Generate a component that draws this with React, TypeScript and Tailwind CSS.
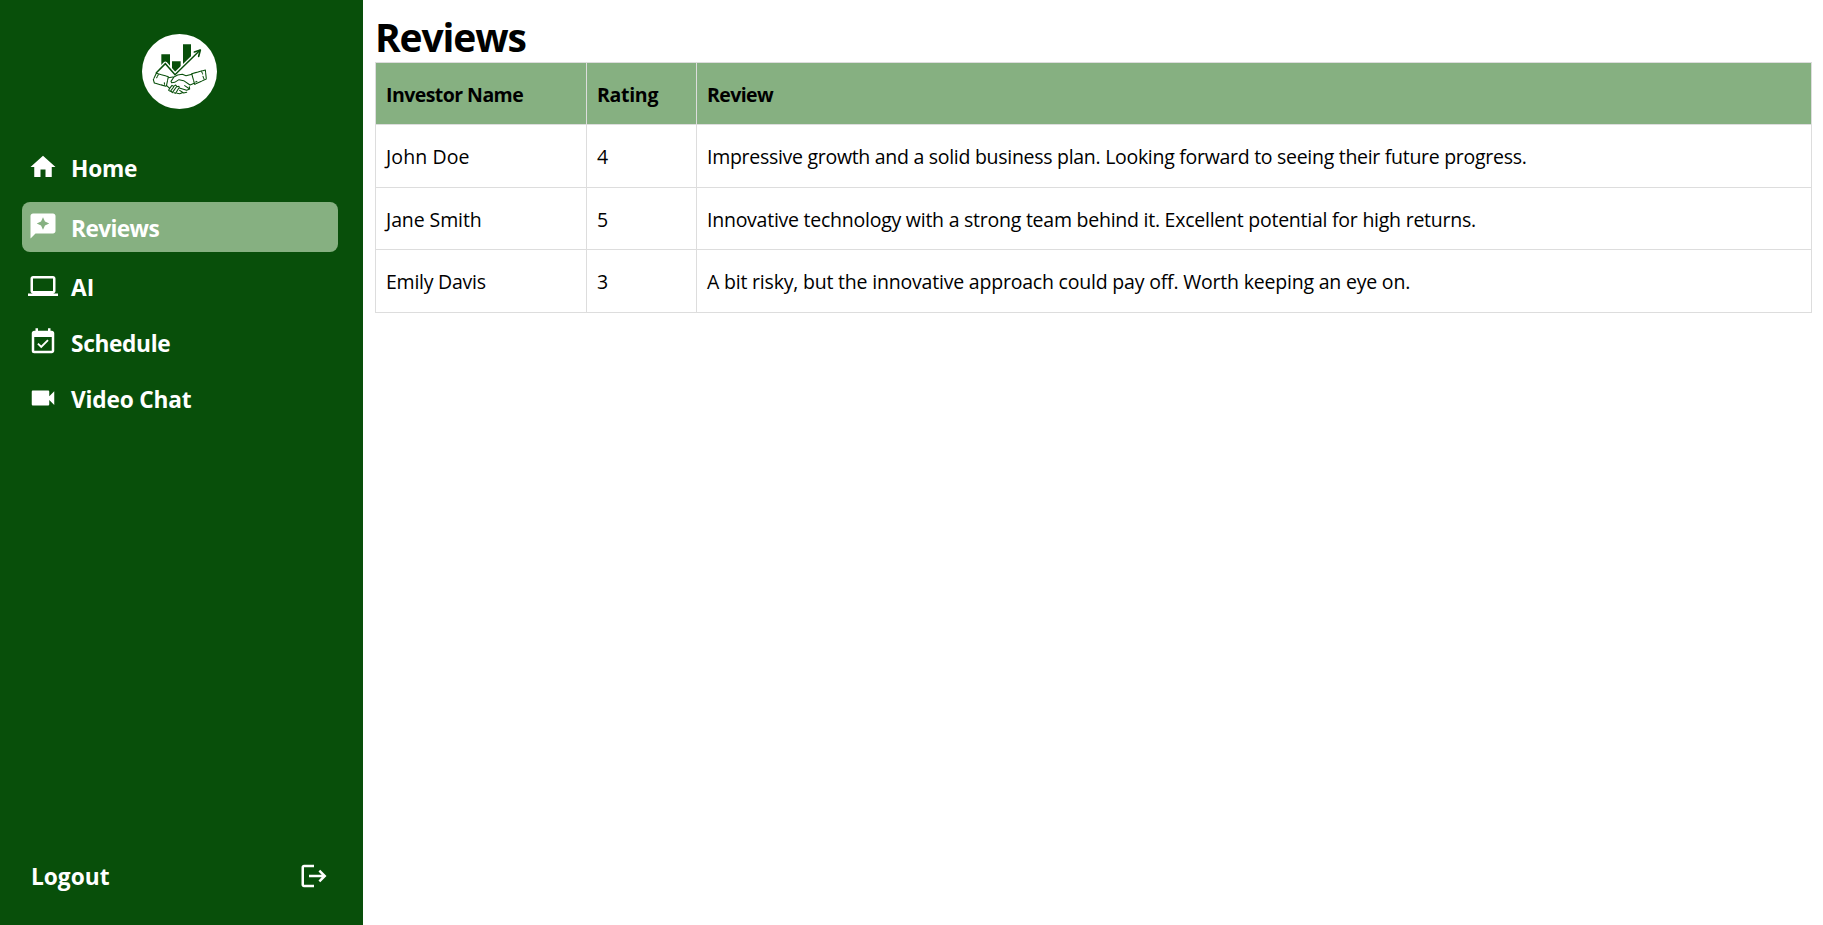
import React from "react";
import { MdComputer, MdEventAvailable, MdHome, MdLogout, MdReviews, MdVideocam } from "react-icons/md";

function Logo() {
  return (
    <svg className="block size-[75px]" viewBox="21 18 225 225" fill="none" stroke="#084f0a" strokeLinejoin="round" strokeLinecap="round">
      <circle cx="133.5" cy="130.5" r="112.5" fill="#fff" stroke="none" />
      <g fill="#084f0a" stroke="none">
        <path d="M79 79h26v38l-14-13-12 13z" />
        <path d="M111 100h26v22l-17 16-9-9z" />
        <path d="M144 49h24v42l-24 23z" />
      </g>
      <path d="M66 132l25-26 29 33 74-72" stroke="#fff" strokeWidth="11" />
      <path d="M64 134l27-27 29 33 75-73" strokeWidth="4.5" strokeLinejoin="miter" />
      <path d="M178 72l18-6-5 19" strokeWidth="5" />
      <g strokeWidth="3.2">
        <path d="M64 136l-9 19 3 10 36 10 6-29z" strokeDasharray="15 2.5" />
        <path d="M70 140l-5 9M88 164l1 8" strokeDasharray="4 3" />
        <path d="M170 137l41-11 3 27-35 16z" strokeDasharray="15 2.5" />
        <path d="M200 131l3 7M204 145l3 8M182 162l6-3" strokeDasharray="4 3" />
        <path d="M100 149l18-3 10-5 14-2 11 4 18-4M117 147l-9 13 2 4 9-1 13-8 14 3 19 13 13-5" />
        <path d="M95 173l9 8 7-9 5 3 6-4 4 5 6-1 1 5 22 7 9-4-1-7M104 181l-3 6 5 3 10-13M109 190l3 4 12-17M117 194l5 2 9-15M126 196l8 1 8-3M134 187l12 8 9-2M149 173l15 10" />
      </g>
    </svg>
  );
}

const items = [
  { label: "Home", Icon: MdHome, row: "mb-[9px]", icon: "mt-[9px]", textClass: "mt-[10px] tracking-[-0.2px]" },
  { label: "Reviews", Icon: MdReviews, row: "mb-[9px] bg-[#86b081]", icon: "mt-[9px]", textClass: "mt-[11px] tracking-[-0.6px]" },
  { label: "AI", Icon: MdComputer, row: "mb-[6px]", icon: "mt-[10px]", textClass: "mt-[11px] tracking-[0.1px]" },
  { label: "Schedule", Icon: MdEventAvailable, row: "mb-[6px]", icon: "mt-[10px]", textClass: "mt-[11px] tracking-[-0.35px]" },
  { label: "Video Chat", Icon: MdVideocam, row: "", icon: "mt-[10px]", textClass: "mt-[11px] tracking-[-0.2px]" },
];

const headers = [
  { label: "Investor Name", track: "tracking-[-0.55px]" },
  { label: "Rating", track: "tracking-[-0.3px]" },
  { label: "Review", track: "tracking-[-0.6px]" },
];

const reviews = [
  { name: "John Doe", rating: 4, text: "Impressive growth and a solid business plan. Looking forward to seeing their future progress.", row: "h-[63px]", pad: "pt-px", nameTrack: "tracking-[0.1px]", track: "tracking-[-0.287px]" },
  { name: "Jane Smith", rating: 5, text: "Innovative technology with a strong team behind it. Excellent potential for high returns.", row: "h-[62px]", pad: "pt-[3px]", nameTrack: "tracking-[-0.1px]", track: "tracking-[-0.245px]" },
  { name: "Emily Davis", rating: 3, text: "A bit risky, but the innovative approach could pay off. Worth keeping an eye on.", row: "h-[63px]", pad: "pt-px", nameTrack: "tracking-[-0.25px]", track: "tracking-[-0.2px]" },
];

export default function App() {
  return (
    <div className="flex h-[925px] w-full overflow-hidden bg-white font-['Open_Sans','Noto_Sans',sans-serif] text-black">
      <aside className="flex w-[363px] shrink-0 flex-col bg-[#084f0a] pt-[34px] text-white">
        <div className="ml-[142px]"><Logo /></div>
        <nav className="ml-[22px] mt-[34px] w-[316px]">
          {items.map(({ label, Icon, row, icon, textClass }) => (
            <a key={label} className={`flex h-[50px] items-start rounded-lg pl-[6px] ${row}`}>
              <Icon className={`size-[30px] shrink-0 ${icon}`} />
              <span className={`ml-[13px] text-[22.7px] font-bold leading-8 whitespace-nowrap ${textClass}`}>{label}</span>
            </a>
          ))}
        </nav>
        <button className="mt-auto mb-[32px] ml-[31px] flex w-[298px] items-start justify-between">
          <span className="text-[22.7px] font-bold leading-8">Logout</span>
          <MdLogout className="size-[30px]" />
        </button>
      </aside>
      <main className="flex-1 pl-3 pr-[11px] pt-[13px]">
        <h1 className="mb-px h-12 text-[39px] font-bold leading-[48px] tracking-[-1.15px]">Reviews</h1>
        <table className="w-[1437px] table-fixed border-collapse text-[19.5px] leading-7">
          <colgroup>
            <col className="w-[211px]" />
            <col className="w-[110px]" />
            <col />
          </colgroup>
          <thead>
            <tr className="h-[62px] bg-[#86b081] text-left">
              {headers.map((h) => (
                <th key={h.label} className={`border border-[#ddd] px-[10px] pt-[3px] font-bold whitespace-nowrap ${h.track}`}>{h.label}</th>
              ))}
            </tr>
          </thead>
          <tbody>
            {reviews.map((r) => (
              <tr key={r.name} className={r.row}>
                <td className={`border border-[#ddd] px-[10px] whitespace-nowrap ${r.pad} ${r.nameTrack}`}>{r.name}</td>
                <td className={`border border-[#ddd] px-[10px] ${r.pad}`}>{r.rating}</td>
                <td className={`border border-[#ddd] px-[10px] whitespace-nowrap ${r.pad} ${r.track}`}>{r.text}</td>
              </tr>
            ))}
          </tbody>
        </table>
      </main>
    </div>
  );
}
